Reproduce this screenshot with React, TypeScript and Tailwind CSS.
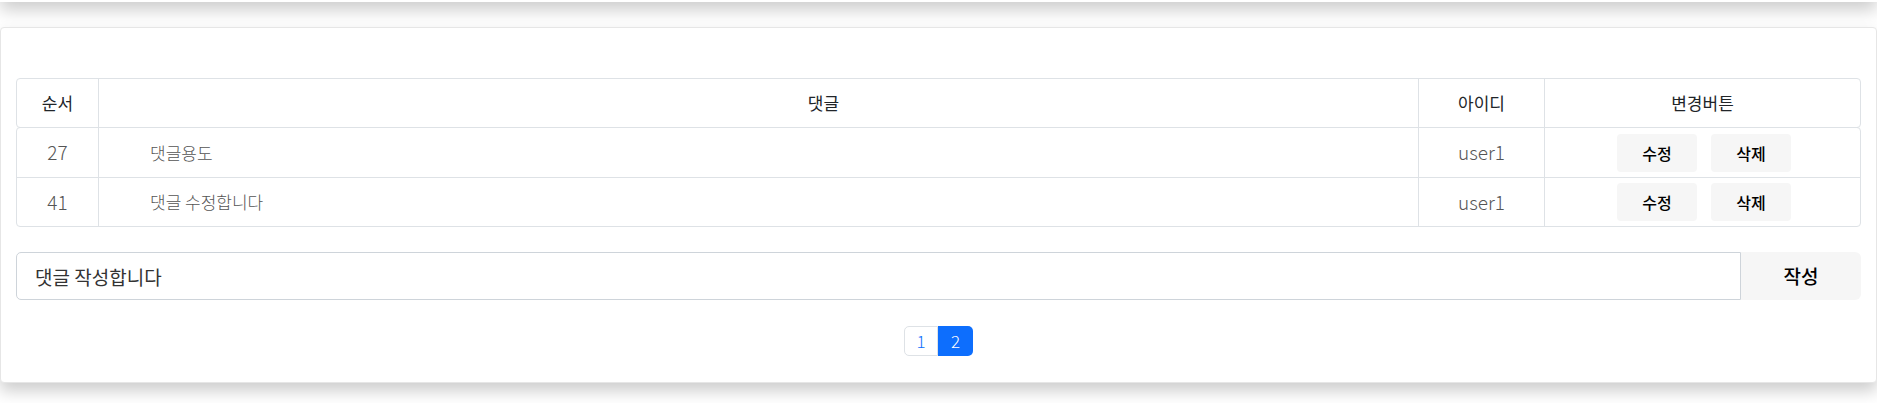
import React from 'react'

const comments = [
    { no: 27, text: '댓글용도', user: 'user1' },
    { no: 41, text: '댓글 수정합니다', user: 'user1' },
]

function App() {
    return (
        <div className="flex min-h-[403px] w-[1877px] flex-col bg-white font-['Noto_Sans_CJK_KR','Noto_Sans',sans-serif]">
            {/* bottom edge of the post card above */}
            <div className="-mt-[60px] h-[62px] shrink-0 bg-white shadow-[0_8px_16px_rgba(0,0,0,0.2)]" />

            <section className="mt-[25px] rounded-[4px] border border-[#e6e6e6] bg-white px-[15px] pt-[50px] pb-[26px] shadow-[0_8px_16px_rgba(0,0,0,0.2)]">
                <div className="w-full text-[17px]">
                    <div className="grid h-[50px] grid-cols-[81px_1fr_126px_316px] rounded-[4px] border border-[#dee2e6] font-normal text-[#212529]">
                        <div className="flex items-center justify-center">순서</div>
                        <div className="flex items-center justify-center border-l border-[#dee2e6] pl-[130px]">댓글</div>
                        <div className="flex items-center justify-center border-l border-[#dee2e6]">아이디</div>
                        <div className="flex items-center justify-center border-l border-[#dee2e6]">변경버튼</div>
                    </div>
                    <div className="-mt-px rounded-[4px] border border-[#dee2e6] font-light text-[#555]">
                        {comments.map((c, i) => (
                            <div
                                key={c.no}
                                className={`grid h-[49px] grid-cols-[81px_1fr_126px_316px] ${i > 0 ? 'border-t border-[#dee2e6]' : ''}`}
                            >
                                <div className="flex items-center justify-center text-[19px]">{c.no}</div>
                                <div className="flex items-center border-l border-[#dee2e6] pl-[51px]">{c.text}</div>
                                <div className="flex items-center justify-center border-l border-[#dee2e6] text-[19px]">{c.user}</div>
                                <div className="flex items-center justify-center gap-[14px] border-l border-[#dee2e6] pl-[3px]">
                                    <button className="h-[38px] w-[80px] rounded-[4px] bg-[#f6f6f6] text-[16px] font-medium text-black">수정</button>
                                    <button className="h-[38px] w-[80px] rounded-[4px] bg-[#f6f6f6] text-[16px] font-medium text-black">삭제</button>
                                </div>
                            </div>
                        ))}
                    </div>
                </div>

                <div className="mt-[25px] flex h-[48px]">
                    <input
                        className="h-full flex-1 rounded-l-[5px] border border-[#ced4da] px-[18px] text-[19px] text-[#333] outline-none"
                        defaultValue="댓글 작성합니다"
                    />
                    <button className="h-full w-[120px] rounded-r-[6px] bg-[#f6f6f6] text-[19px] font-medium text-black">작성</button>
                </div>

                <div className="mt-[26px] flex justify-center text-[17px] font-light">
                    <a className="flex h-[30px] w-[34px] items-center justify-center rounded-l-[5px] border border-[#dee2e6] text-[#0d6efd]">1</a>
                    <a className="flex h-[30px] w-[35px] items-center justify-center rounded-r-[5px] bg-[#0d6efd] text-white">2</a>
                </div>
            </section>
        </div>
    )
}

export default App
